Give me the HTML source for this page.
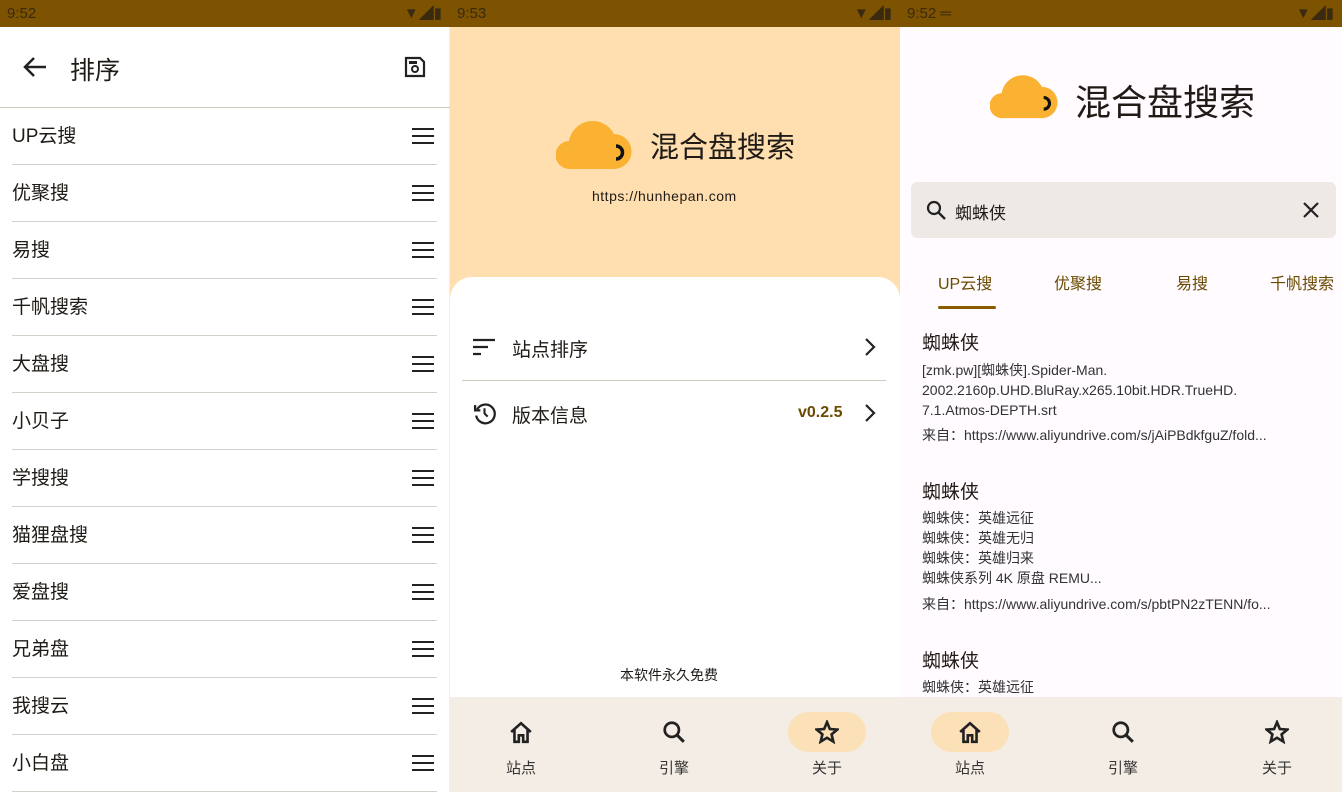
<!DOCTYPE html>
<html><head><meta charset="utf-8"><style>
*{margin:0;padding:0;box-sizing:border-box}
body{width:1342px;height:792px;overflow:hidden;font-family:"Liberation Sans","Noto Sans CJK SC",sans-serif;color:#1f1b16;background:#fff;position:relative}
.abs{position:absolute}
.sb{top:0;height:27px;background:#7d5200;color:#3a2a10;font-size:15px;line-height:27px}
.row{position:absolute;left:12px;width:425px;height:57px;border-bottom:1px solid #d5d0ca;font-size:19px;line-height:57px}
.ham{position:absolute;right:3px;top:20px;width:22px;height:16px;border-top:2.5px solid #222;border-bottom:2.5px solid #222}
.ham:after{content:"";position:absolute;left:0;right:0;top:4.5px;border-top:2.5px solid #222}
.nav{top:697px;height:95px;background:#f3ede5}
.ni{position:absolute;width:80px;text-align:center;font-size:15px;color:#333}
.pill{position:absolute;top:15px;width:78px;height:40px;border-radius:20px;background:#fce0b8}
</style></head><body>
<div class="abs sb" style="left:0;width:450px;padding-left:7px">9:52<span style="position:absolute;right:8px">▼◢▮</span></div>
<div class="abs sb" style="left:450px;width:450px;padding-left:7px">9:53<span style="position:absolute;right:8px">▼◢▮</span></div>
<div class="abs sb" style="left:900px;width:442px;padding-left:7px">9:52 ═<span style="position:absolute;right:8px">▼◢▮</span></div>

<div class="abs" style="left:0;top:27px;width:450px;height:765px;background:#fff;border-right:1px solid #eee">
<svg class="abs" style="left:22px;top:28px" width="26" height="24" viewBox="0 0 26 24"><path d="M24 12H3M12 3L3 12l9 9" stroke="#222" stroke-width="2.5" fill="none"/></svg>
<div class="abs" style="left:70px;top:24px;font-size:25px">排序</div>
<svg class="abs" style="left:403px;top:28px" width="24" height="24" viewBox="0 0 24 24"><path d="M3 3h14l4 4v14H3z" stroke="#222" stroke-width="2.2" fill="none"/><circle cx="12" cy="14" r="3" stroke="#222" stroke-width="2" fill="none"/><rect x="6" y="6" width="8" height="3" fill="#222"/></svg>
<div class="abs" style="left:0;top:80px;width:450px;border-top:1px solid #cfc9c2"></div>
</div>
<div class="row" style="top:108px">UP云搜<div class="ham"></div></div>
<div class="row" style="top:165px">优聚搜<div class="ham"></div></div>
<div class="row" style="top:222px">易搜<div class="ham"></div></div>
<div class="row" style="top:279px">千帆搜索<div class="ham"></div></div>
<div class="row" style="top:336px">大盘搜<div class="ham"></div></div>
<div class="row" style="top:393px">小贝子<div class="ham"></div></div>
<div class="row" style="top:450px">学搜搜<div class="ham"></div></div>
<div class="row" style="top:507px">猫狸盘搜<div class="ham"></div></div>
<div class="row" style="top:564px">爱盘搜<div class="ham"></div></div>
<div class="row" style="top:621px">兄弟盘<div class="ham"></div></div>
<div class="row" style="top:678px">我搜云<div class="ham"></div></div>
<div class="row" style="top:735px">小白盘<div class="ham"></div></div>

<svg width="0" height="0" style="position:absolute"><defs>
<g id="cloud"><path d="M14 57a14 14 0 0 1-1-28 A24 24 0 0 1 58 22a17 17 0 0 1 0 35z" fill="#fbb232"/><path d="M60 34a6 6 0 0 1 0 13" stroke="#111" stroke-width="3.5" fill="none"/></g>
<g id="home"><path d="M2 11L11 3l9 8M5 9v11h4v-6h4v6h4V9" stroke="#222" stroke-width="2.4" fill="none"/></g>
<g id="srch"><circle cx="9" cy="9" r="6.5" stroke="#222" stroke-width="2.5" fill="none"/><path d="M13.5 13.5L20 20" stroke="#222" stroke-width="2.8"/></g>
<g id="star"><path d="M11 2l2.6 6.3 6.8.5-5.2 4.4 1.6 6.6L11 16.3 5.2 19.8l1.6-6.6L1.6 8.8l6.8-.5z" stroke="#222" stroke-width="2.4" fill="none"/></g>
</defs></svg>

<div class="abs" style="left:450px;top:27px;width:450px;height:280px;background:#ffdeb0"></div>
<svg class="abs" style="left:556px;top:112px" width="76" height="60" viewBox="0 0 76 60"><use href="#cloud"/></svg>
<div class="abs" style="left:650px;top:124px;font-size:29px">混合盘搜索</div>
<div class="abs" style="left:592px;top:188px;font-size:14px;letter-spacing:.5px">https://hunhepan.com</div>
<div class="abs" style="left:450px;top:277px;width:450px;height:420px;background:#fff;border-radius:22px 22px 0 0"></div>
<svg class="abs" style="left:473px;top:338px" width="22" height="18"><path d="M0 2h22M0 9h15M0 16h8" stroke="#222" stroke-width="2.2"/></svg>
<div class="abs" style="left:512px;top:335px;font-size:19px">站点排序</div>
<svg class="abs" style="left:864px;top:338px" width="12" height="18"><path d="M2 1l8 8-8 8" stroke="#222" stroke-width="2.2" fill="none"/></svg>
<div class="abs" style="left:462px;top:380px;width:424px;border-top:1px solid #cfc9c2"></div>
<svg class="abs" style="left:472px;top:401px" width="25" height="25" viewBox="0 0 24 24"><path d="M5 8a9 9 0 1 1-1 6" stroke="#222" stroke-width="2.2" fill="none"/><path d="M3 4v5h5" stroke="#222" stroke-width="2.2" fill="none"/><path d="M12 7v5l3 3" stroke="#222" stroke-width="2" fill="none"/></svg>
<div class="abs" style="left:512px;top:401px;font-size:19px">版本信息</div>
<div class="abs" style="left:798px;top:404px;font-size:16px;font-weight:bold;color:#6a4a00">v0.2.5</div>
<svg class="abs" style="left:864px;top:404px" width="12" height="18"><path d="M2 1l8 8-8 8" stroke="#222" stroke-width="2.2" fill="none"/></svg>
<div class="abs" style="left:620px;top:665px;font-size:14px">本软件永久免费</div>

<div class="abs" style="left:900px;top:27px;width:442px;height:670px;background:#fffbff"></div>
<svg class="abs" style="left:990px;top:66px" width="68" height="56" viewBox="0 0 76 60"><use href="#cloud"/></svg>
<div class="abs" style="left:1075px;top:74px;font-size:36px">混合盘搜索</div>
<div class="abs" style="left:911px;top:182px;width:425px;height:56px;background:#efe9e6;border-radius:6px"></div>
<svg class="abs" style="left:926px;top:200px" width="20" height="20"><circle cx="8" cy="8" r="6" stroke="#222" stroke-width="2.2" fill="none"/><path d="M12.5 12.5L19 19" stroke="#222" stroke-width="2.4"/></svg>
<div class="abs" style="left:955px;top:199px;font-size:17px">蜘蛛侠</div>
<svg class="abs" style="left:1303px;top:202px" width="16" height="16"><path d="M1 1l14 14M15 1L1 15" stroke="#222" stroke-width="2.2"/></svg>
<div class="abs" style="left:938px;top:270px;font-size:16px;color:#6a4a00">UP云搜</div>
<div class="abs" style="left:1054px;top:270px;font-size:16px;color:#6a4a00">优聚搜</div>
<div class="abs" style="left:1176px;top:270px;font-size:16px;color:#6a4a00">易搜</div>
<div class="abs" style="left:1270px;top:270px;font-size:16px;color:#6a4a00;white-space:nowrap">千帆搜索</div>
<div class="abs" style="left:938px;top:306px;width:58px;height:3px;background:#8a5c00;border-radius:2px"></div>
<div class="abs" style="left:922px;top:328px;font-size:19px">蜘蛛侠</div>
<div class="abs" style="left:922px;top:360px;font-size:14px;line-height:20px;color:#333">[zmk.pw][蜘蛛侠].Spider-Man.<br>2002.2160p.UHD.BluRay.x265.10bit.HDR.TrueHD.<br>7.1.Atmos-DEPTH.srt</div>
<div class="abs" style="left:922px;top:425px;font-size:14px;color:#333;white-space:nowrap">来自：https://www.aliyundrive.com/s/jAiPBdkfguZ/fold...</div>
<div class="abs" style="left:922px;top:477px;font-size:19px">蜘蛛侠</div>
<div class="abs" style="left:922px;top:508px;font-size:14px;line-height:20px;color:#333">蜘蛛侠：英雄远征<br>蜘蛛侠：英雄无归<br>蜘蛛侠：英雄归来<br>蜘蛛侠系列 4K 原盘 REMU...</div>
<div class="abs" style="left:922px;top:594px;font-size:14px;color:#333;white-space:nowrap">来自：https://www.aliyundrive.com/s/pbtPN2zTENN/fo...</div>
<div class="abs" style="left:922px;top:646px;font-size:19px">蜘蛛侠</div>
<div class="abs" style="left:922px;top:677px;font-size:14px;color:#333">蜘蛛侠：英雄远征</div>

<div class="abs nav" style="left:450px;width:450px"><div class="pill" style="left:338px"></div></div>
<div class="abs nav" style="left:900px;width:442px"><div class="pill" style="left:31px"></div></div>
<svg class="abs" style="left:509px;top:720px" width="24" height="24" viewBox="0 0 22 22"><use href="#home"/></svg>
<svg class="abs" style="left:662px;top:720px" width="24" height="24" viewBox="0 0 22 22"><use href="#srch"/></svg>
<svg class="abs" style="left:815px;top:720px" width="24" height="24" viewBox="0 0 22 22"><use href="#star"/></svg>
<svg class="abs" style="left:958px;top:720px" width="24" height="24" viewBox="0 0 22 22"><use href="#home"/></svg>
<svg class="abs" style="left:1111px;top:720px" width="24" height="24" viewBox="0 0 22 22"><use href="#srch"/></svg>
<svg class="abs" style="left:1265px;top:720px" width="24" height="24" viewBox="0 0 22 22"><use href="#star"/></svg>
<div class="ni" style="left:481px;top:757px">站点</div>
<div class="ni" style="left:634px;top:757px">引擎</div>
<div class="ni" style="left:787px;top:757px">关于</div>
<div class="ni" style="left:930px;top:757px">站点</div>
<div class="ni" style="left:1083px;top:757px">引擎</div>
<div class="ni" style="left:1237px;top:757px">关于</div>
</body></html>
